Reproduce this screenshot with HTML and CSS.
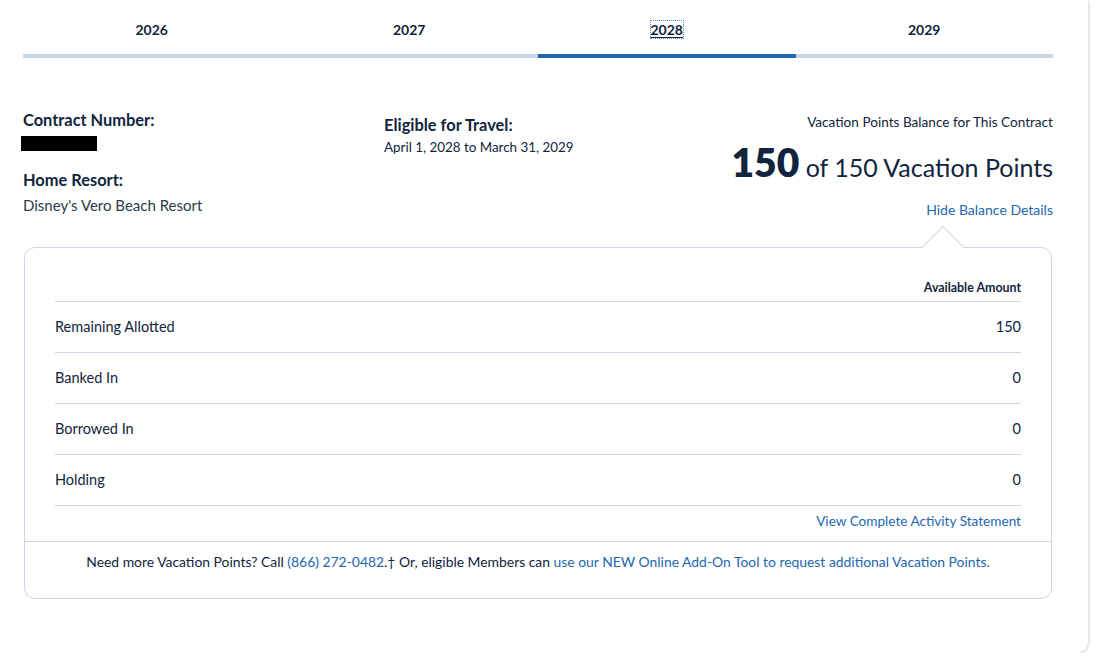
FILE: index.html
```html
<!DOCTYPE html>
<html lang="en">
<head>
    <meta charset="UTF-8">
    <meta name="viewport" content="width=device-width, initial-scale=1.0">
    <title>Vacation Points Balance</title>
    <link rel="stylesheet" href="styles.css">
</head>
<body>
    <div class="panel">
        <nav class="years">
            <a class="year" href="#"><span>2026</span></a>
            <a class="year" href="#"><span>2027</span></a>
            <a class="year active" href="#"><span>2028</span></a>
            <a class="year" href="#"><span>2029</span></a>
        </nav>

        <section class="contract">
            <div class="col">
                <h3>Contract Number:</h3>
                <span class="redacted"></span>
                <h3 class="resort-label">Home Resort:</h3>
                <p class="resort">Disney's Vero Beach Resort</p>
            </div>
            <div class="col travel">
                <h3>Eligible for Travel:</h3>
                <p>April 1, 2028 to March 31, 2029</p>
            </div>
            <div class="col balance">
                <p class="balance-label">Vacation Points Balance for This Contract</p>
                <p class="balance-total"><strong>150</strong> of 150 Vacation Points</p>
                <a class="link toggle" href="#">Hide Balance Details</a>
            </div>
        </section>

        <div class="details">
            <div class="details-body">
                <table>
                    <thead>
                        <tr>
                            <th></th>
                            <th>Available Amount</th>
                        </tr>
                    </thead>
                    <tbody>
                        <tr><td>Remaining Allotted</td><td>150</td></tr>
                        <tr><td>Banked In</td><td>0</td></tr>
                        <tr><td>Borrowed In</td><td>0</td></tr>
                        <tr><td>Holding</td><td>0</td></tr>
                    </tbody>
                </table>
                <div class="statement">
                    <a class="link" href="#">View Complete Activity Statement</a>
                </div>
            </div>
            <p class="addon">Need more Vacation Points? Call <a class="link" href="#">(866) 272-0482</a>.&dagger; Or, eligible Members can <a class="link" href="#">use our NEW Online Add-On Tool to request additional Vacation Points.</a></p>
        </div>
    </div>
</body>
</html>
```

FILE: styles.css
```css
body {
    font-family: Lato, "Noto Sans", Arial, sans-serif;
    margin: 0;
    padding: 0;
    background-color: #fff;
    color: #10243d;
}
a {
    text-decoration: none;
}
h3, p {
    margin: 0;
}
.link {
    color: #2367ae;
}
.panel {
    width: 1088px;
    box-sizing: border-box;
    padding: 0 35px 54px 23px;
    background-color: #fff;
    border-radius: 0 0 12px 0;
    box-shadow: 1px 1px 3px rgba(120, 140, 170, 0.35);
}

/* year tabs */
.years {
    display: grid;
    grid-template-columns: repeat(4, 1fr);
}
.year {
    text-align: center;
    font-size: 14px;
    font-weight: 700;
    line-height: 20px;
    color: #10243d;
    padding: 20px 0 14px;
    border-bottom: 4px solid #c9d5e1;
}
.year.active {
    border-bottom-color: #1f66ad;
}
.year.active span {
    text-decoration: underline;
    text-underline-offset: 2px;
    outline: 1px dotted #5b8ccc;
    outline-offset: 0;
}

/* contract summary */
.contract {
    display: grid;
    grid-template-columns: 361px 1fr auto;
    padding-top: 52px;
}
.contract h3 {
    font-size: 16.4px;
    line-height: 20px;
    font-weight: 700;
}
.redacted {
    display: block;
    width: 76px;
    height: 15px;
    margin: 6px 0 0 -2px;
    background-color: #000;
}
.resort-label {
    margin-top: 19px;
}
.resort {
    font-size: 15px;
    line-height: 20px;
    margin-top: 5px;
    color: #2b3a4c;
}
.travel {
    padding-top: 5px;
}
.travel p {
    font-size: 13.4px;
    line-height: 18px;
    margin-top: 3px;
}
.balance {
    text-align: right;
    padding-top: 3px;
}
.balance-label {
    font-size: 13.6px;
    line-height: 18px;
}
.balance-total {
    font-size: 25px;
    line-height: 40px;
    margin-top: 11px;
    font-weight: 400;
}
.balance-total strong {
    font-size: 39px;
    font-weight: 800;
}
.toggle {
    display: inline-block;
    font-size: 14px;
    line-height: 20px;
    margin-top: 13px;
}

/* balance details box */
.details {
    position: relative;
    margin: 27px 1px 0;
    border: 1px solid #cbd7e3;
    border-radius: 11px;
}
.details::before {
    content: "";
    position: absolute;
    top: -16px;
    right: 93px;
    width: 29px;
    height: 29px;
    background-color: #fff;
    border-top: 1px solid #cbd7e3;
    border-left: 1px solid #cbd7e3;
    transform: rotate(45deg);
}
.details-body {
    position: relative;
    padding: 26px 30px 0 30px;
}
.details table {
    width: 100%;
    border-collapse: collapse;
}
.details th {
    font-size: 12.4px;
    font-weight: 700;
    text-align: right;
    height: 27px;
    padding: 0;
    border-bottom: 1px solid #cbd7e3;
}
.details td {
    font-size: 14.5px;
    height: 47px;
    padding: 1px 0 2px;
    border-bottom: 1px solid #cbd7e3;
}
.details td:last-child {
    text-align: right;
}
.statement {
    text-align: right;
    font-size: 13.6px;
    line-height: 18px;
    padding: 6px 0 11px;
}
.addon {
    border-top: 1px solid #cbd7e3;
    text-align: center;
    font-size: 13.9px;
    line-height: 18px;
    padding: 11px 0 27px;
}
```
